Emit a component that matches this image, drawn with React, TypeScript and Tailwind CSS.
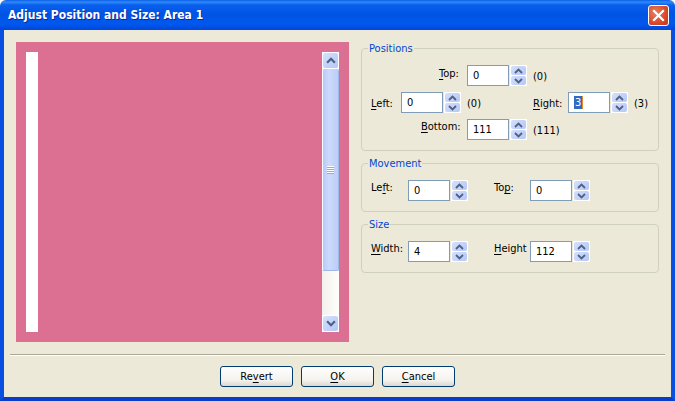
import React from 'react';

const Chevron = ({ dir, big }: { dir: 'up' | 'down'; big?: boolean }) => (
  <svg width={big ? 10 : 9} height={big ? 7 : 6} viewBox="0 0 9 6" className="block">
    <path
      d={dir === 'up' ? 'M1 5 L4.5 1.5 L8 5' : 'M1 1 L4.5 4.5 L8 1'}
      fill="none"
      stroke="#4d6185"
      strokeWidth={big ? 2 : 1.8}
    />
  </svg>
);

const Spinner = () => (
  <div className="flex h-[21px] w-[17px] shrink-0 flex-col gap-px bg-white p-px">
    <div className="flex flex-1 items-center justify-center rounded-[2px] bg-[linear-gradient(135deg,#d5e0fb,#b4c7f6)]">
      <Chevron dir="up" />
    </div>
    <div className="flex flex-1 items-center justify-center rounded-[2px] bg-[linear-gradient(135deg,#d5e0fb,#b4c7f6)]">
      <Chevron dir="down" />
    </div>
  </div>
);

const Field = ({ value, selected }: { value: string; selected?: boolean }) => (
  <div className="flex shrink-0 items-center gap-px">
    <div className="flex h-[21px] w-[42px] items-center border border-[#7f9db9] bg-white pl-[5px] leading-[13px] text-black">
      {selected ? (
        <span className="border-r border-[#e08a2c] bg-[#316ac5] px-px text-white">{value}</span>
      ) : (
        value
      )}
    </div>
    <Spinner />
  </div>
);

const Group = ({ title, children }: { title: string; children: React.ReactNode }) => (
  <div className="relative rounded-[4px] border border-[#d0d0bf]">
    <span className="absolute -top-[7px] left-[6px] bg-[#ece9d8] px-px leading-[14px] text-[#0046d5]">{title}</span>
    {children}
  </div>
);

const Mn = ({ children }: { children: React.ReactNode }) => (
  <span className="underline underline-offset-2">{children}</span>
);

const PushButton = ({ children }: { children: React.ReactNode }) => (
  <button className="flex h-[21px] w-[73px] items-center justify-center rounded-[3px] border border-[#003c74] bg-[linear-gradient(180deg,#ffffff,#f3f2ec_70%,#dcd8ce)] pt-[2px] text-black">
    {children}
  </button>
);

const Scrollbar = () => (
  <div className="flex h-full w-[17px] flex-col bg-[linear-gradient(90deg,#f3f1ec,#fefefb)]">
    <div className="h-[17px] bg-white p-px">
      <div className="flex h-full items-center justify-center rounded-[2px] bg-[linear-gradient(135deg,#d5e0fb,#b4c7f6)]">
        <Chevron dir="up" big />
      </div>
    </div>
    <div className="flex flex-1 flex-col items-center justify-center rounded-[2px] border-b border-l border-r border-b-[#9db8e8] border-l-white border-r-[#9db8e8] bg-[linear-gradient(90deg,#b6c9f7,#ccdafc_40%,#bccdf8)]">
      <div className="h-px w-[7px] bg-white" />
      <div className="h-px w-[7px] bg-[#8faae8]" />
      <div className="h-px w-[7px] bg-white" />
      <div className="h-px w-[7px] bg-[#8faae8]" />
      <div className="h-px w-[7px] bg-white" />
      <div className="h-px w-[7px] bg-[#8faae8]" />
      <div className="h-px w-[7px] bg-white" />
      <div className="h-px w-[7px] bg-[#8faae8]" />
    </div>
    <div className="h-[44px]" />
    <div className="h-[17px] bg-white p-px">
      <div className="flex h-full items-center justify-center rounded-[2px] bg-[linear-gradient(135deg,#d5e0fb,#b4c7f6)]">
        <Chevron dir="down" big />
      </div>
    </div>
  </div>
);

export default function App() {
  return (
    <div className="flex h-[401px] w-[675px] flex-col bg-white font-['DejaVu_Sans_Condensed','DejaVu_Sans',sans-serif] text-[11px] text-black">
      {/* title bar */}
      <div className="flex h-[30px] shrink-0 items-center justify-between rounded-t-[6px] bg-[linear-gradient(180deg,#0a5ce8_0px,#2f8cf8_2px,#0a60ee_5px,#0053e4_14px,#0058ee_24px,#0046d8_30px)] pl-[8px] pr-[6px]">
        <span className="text-[12px] font-bold text-white [text-shadow:1px_1px_0_#0a2a9a]">
          Adjust Position and Size: Area 1
        </span>
        <div className="flex h-[21px] w-[21px] items-center justify-center rounded-[3px] border border-white bg-[radial-gradient(circle_at_35%_35%,#e8805f,#d8492a_60%,#b83a1c)]">
          <svg width="13" height="13" viewBox="0 0 13 13">
            <path d="M2 2 L11 11 M11 2 L2 11" stroke="#fff" strokeWidth="2.2" strokeLinecap="square" />
          </svg>
        </div>
      </div>

      <div className="flex flex-1 flex-col border-x-4 border-b-4 border-x-[#0a50e0] border-b-[#0a3cc8] bg-[#ece9d8]">
        <div className="flex px-[12px] pt-[12px]">
          {/* preview */}
          <div className="flex h-[300px] w-[333px] shrink-0 justify-between bg-[#dc7092] p-[10px]">
            <div className="w-[12px] bg-white" />
            <Scrollbar />
          </div>

          {/* right column */}
          <div className="ml-[12px] mt-[6px] flex w-[298px] flex-col">
            <Group title="Positions">
              <div className="flex flex-col gap-[6px] pb-[10px] pt-[16px]">
                <div className="flex items-start pl-[105px]">
                  <Field value="0" />
                  <span className="ml-[6px] mt-[4px] leading-[16px]">(0)</span>
                  <span className="absolute left-[77px] top-[17px] leading-[16px]">
                    <Mn>T</Mn>op:
                  </span>
                </div>
                <div className="flex items-start pl-[9px]">
                  <span className="mt-[4px] w-[30px] leading-[16px]">
                    <Mn>L</Mn>eft:
                  </span>
                  <Field value="0" />
                  <span className="ml-[6px] mt-[4px] w-[66px] leading-[16px]">(0)</span>
                  <span className="mt-[4px] w-[35px] leading-[16px]">
                    <Mn>R</Mn>ight:
                  </span>
                  <Field value="3" selected />
                  <span className="ml-[6px] mt-[4px] leading-[16px]">(3)</span>
                </div>
                <div className="flex items-start pl-[59px]">
                  <span className="w-[46px] leading-[16px]">
                    <Mn>B</Mn>ottom:
                  </span>
                  <Field value="111" />
                  <span className="ml-[6px] mt-[4px] leading-[16px]">(111)</span>
                </div>
              </div>
            </Group>

            <div className="mt-[12px]">
              <Group title="Movement">
                <div className="flex items-start pb-[10px] pl-[9px] pt-[16px]">
                  <span className="mt-px w-[37px] leading-[14px]">
                    Le<Mn>f</Mn>t:
                  </span>
                  <Field value="0" />
                  <span className="ml-[26px] mt-px w-[36px] leading-[14px]">
                    To<Mn>p</Mn>:
                  </span>
                  <Field value="0" />
                </div>
              </Group>
            </div>

            <div className="mt-[12px]">
              <Group title="Size">
                <div className="flex items-start pb-[10px] pl-[9px] pt-[16px]">
                  <span className="mt-px w-[37px] leading-[14px]">
                    <Mn>W</Mn>idth:
                  </span>
                  <Field value="4" />
                  <span className="ml-[26px] mt-px w-[36px] leading-[14px]">
                    <Mn>H</Mn>eight
                  </span>
                  <Field value="112" />
                </div>
              </Group>
            </div>
          </div>
        </div>

        <div className="mx-[6px] mt-[12px] h-[2px] border-b border-t border-b-white border-t-[#aca899]" />

        <div className="mt-[10px] flex justify-center gap-[8px]">
          <PushButton>
            Re<Mn>v</Mn>ert
          </PushButton>
          <PushButton>
            <Mn>O</Mn>K
          </PushButton>
          <PushButton>
            <Mn>C</Mn>ancel
          </PushButton>
        </div>
      </div>
    </div>
  );
}
